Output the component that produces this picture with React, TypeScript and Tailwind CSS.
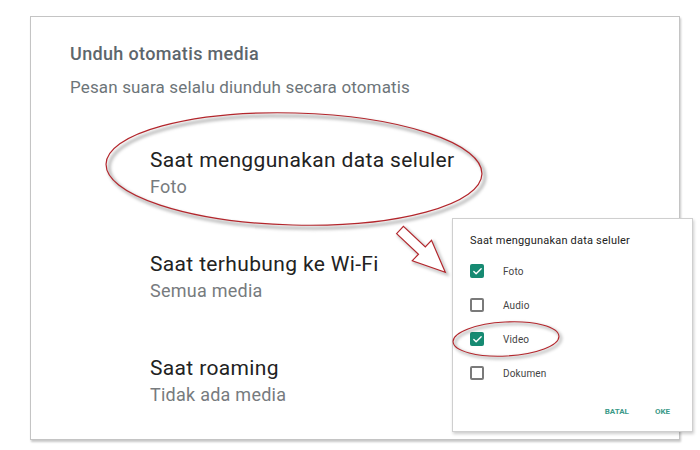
import { Check } from 'lucide-react'

const items = [
  { title: 'Saat menggunakan data seluler', sub: 'Foto' },
  { title: 'Saat terhubung ke Wi-Fi', sub: 'Semua media' },
  { title: 'Saat roaming', sub: 'Tidak ada media' },
]

const options = [
  { label: 'Foto', checked: true },
  { label: 'Audio', checked: false },
  { label: 'Video', checked: true },
  { label: 'Dokumen', checked: false },
]

function Box({ checked }: { checked: boolean }) {
  if (checked) {
    return (
      <span className="flex h-[14px] w-[14px] items-center justify-center rounded-[2px] bg-[#168a72]">
        <Check size={11} strokeWidth={3} className="text-white" />
      </span>
    )
  }
  return <span className="h-[14px] w-[14px] rounded-[2px] border-2 border-[#7a7a7a]" />
}

function Annotations() {
  return (
    <svg className="pointer-events-none absolute inset-0" width={700} height={450} viewBox="0 0 700 450">
      <defs>
        <filter id="soft" x="-10%" y="-30%" width="120%" height="160%">
          <feGaussianBlur stdDeviation="1.6" />
        </filter>
      </defs>
      {/* big ellipse */}
      <ellipse cx={297} cy={172} rx={188} ry={56} transform="rotate(1.5 297 172)" fill="none" stroke="rgba(0,0,0,0.28)" strokeWidth={3} filter="url(#soft)" />
      <ellipse cx={294} cy={169} rx={188} ry={56} transform="rotate(1.5 294 169)" fill="none" stroke="#b3262c" strokeWidth={1.2} />
      {/* arrow */}
      <polygon
        points="398.6,235.6 420.5,256.2 414.3,262.7 447.3,274.3 433.5,242.3 427.3,248.9 405.4,228.4"
        fill="none"
        stroke="rgba(0,0,0,0.25)"
        strokeWidth={2.5}
        filter="url(#soft)"
      />
      <polygon
        points="396.6,233.6 418.5,254.2 412.3,260.7 445.3,272.3 431.5,240.3 425.3,246.9 403.4,226.4"
        fill="white"
        stroke="#b3262c"
        strokeWidth={1.2}
        strokeLinejoin="miter"
      />
      {/* small ellipse */}
      <ellipse cx={508} cy={341} rx={53} ry={17} transform="rotate(-3 508 341)" fill="none" stroke="rgba(0,0,0,0.25)" strokeWidth={2.5} filter="url(#soft)" />
      <ellipse cx={506} cy={339} rx={53} ry={17} transform="rotate(-3 506 339)" fill="none" stroke="#b3262c" strokeWidth={1.1} />
    </svg>
  )
}

export default function App() {
  return (
    <div className="relative h-[450px] w-[700px] overflow-hidden bg-white font-['Roboto',sans-serif]">
      <div className="ml-[30px] mt-4 h-[424px] w-[650px] border border-[#c4c4c4] bg-white pl-[39px] pt-[25px] shadow-[1px_2px_2px_rgba(0,0,0,0.22)]">
        <h1 className="text-[18px] font-medium leading-[24px] tracking-[0.35px] text-[#5d666c]">Unduh otomatis media</h1>
        <p className="mt-[10px] text-[17px] leading-[22px] tracking-[0.15px] text-[#6d7579]">Pesan suara selalu diunduh secara otomatis</p>
        <div className="ml-20 mt-[49px] flex flex-col gap-[53px]">
          {items.map((item) => (
            <div key={item.title}>
              <p className="text-[21px] leading-[26px] tracking-[0.35px] text-[#222222]">{item.title}</p>
              <p className="mt-[3px] text-[18px] leading-[22px] tracking-[0.25px] text-[#777b7e]">{item.sub}</p>
            </div>
          ))}
        </div>
      </div>

      <div className="absolute left-[452px] top-[218px] flex h-[214px] w-[241px] flex-col border border-[#cfcfcf] bg-white pl-[17px] pr-[22px] pt-[15px] shadow-[1px_2px_3px_rgba(0,0,0,0.2)]">
        <p className="text-[11px] leading-[14px] tracking-[0.2px] text-[#222222]">Saat menggunakan data seluler</p>
        <div className="mt-[6px] flex flex-col">
          {options.map((opt) => (
            <div key={opt.label} className="flex h-[34px] items-center gap-[19px]">
              <Box checked={opt.checked} />
              <span className="text-[10px] tracking-[0.15px] text-[#444444]">{opt.label}</span>
            </div>
          ))}
        </div>
        <div className="mt-[16px] flex justify-end gap-[26px] text-[8px] font-bold text-[#3b9a88]">
          <span>BATAL</span>
          <span>OKE</span>
        </div>
      </div>

      <Annotations />
    </div>
  )
}
